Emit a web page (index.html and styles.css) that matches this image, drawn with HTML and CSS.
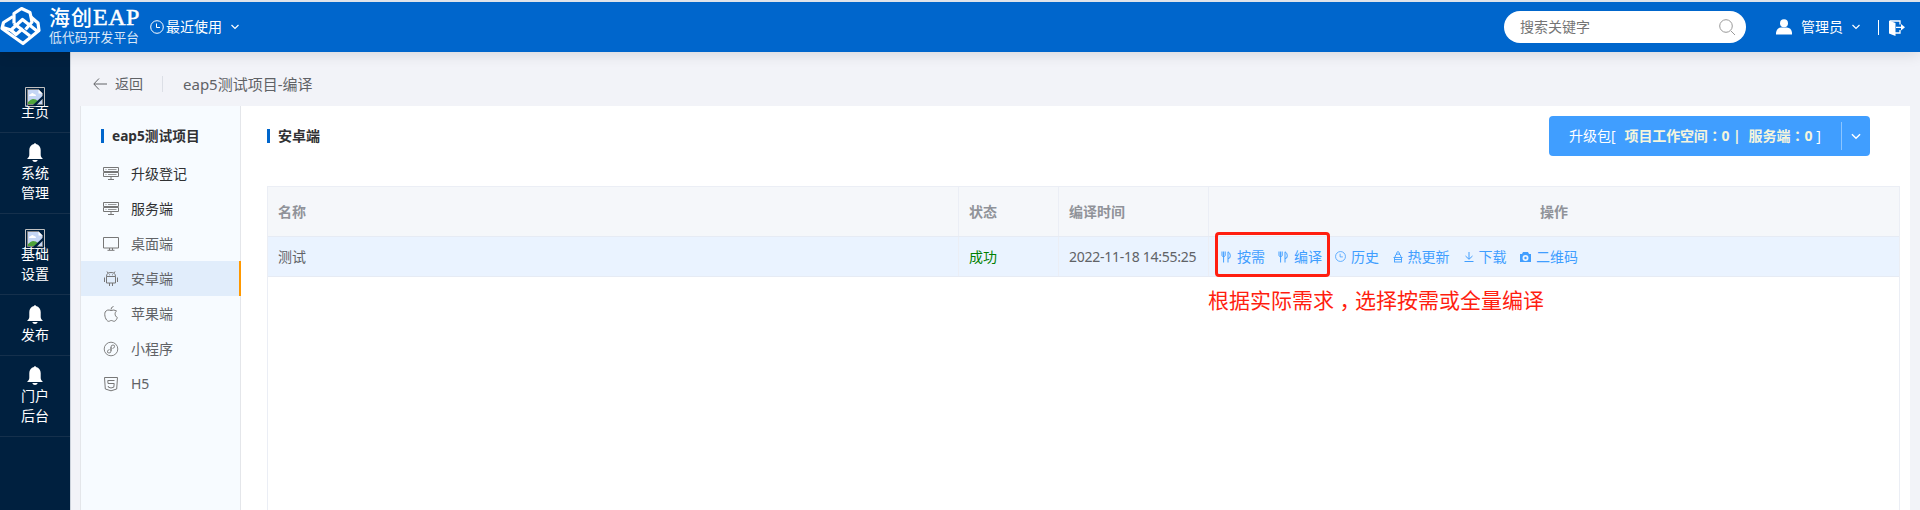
FILE: index.html
```html
<!DOCTYPE html>
<html lang="zh-CN">
<head>
<meta charset="utf-8">
<title>eap5测试项目-编译</title>
<link rel="stylesheet" href="styles.css">
</head>
<body>
<svg class="defs" width="0" height="0">
  <symbol id="bell" viewBox="0 0 16 19"><path fill="currentColor" d="M7 1q1-2 2 0c3 .7 4.700 3 4.700 6v5c0 1.600 .8 2.500 2.300 4H0c1.500-1.500 2.300-2.400 2.300-4V7c0-3 1.700-5.300 4.700-6zM5.200 17h5.600q-.8 2-2.800 2t-2.800-2z"/></symbol>
  <symbol id="down" viewBox="0 0 10 6"><path d="M1.500 1L5 4.500 8.500 1" fill="none" stroke="currentColor" stroke-width="1.200"/></symbol>
  <symbol id="clock" viewBox="0 0 14 14"><g fill="none" stroke="currentColor"><circle cx="7" cy="7" r="6.300"/><path d="M6.500 3.500v4H10"/></g></symbol>
  <symbol id="broken" viewBox="0 0 20 20"><path fill="none" stroke="#c0c0c0" d="M.5 .5h19v19H.5z"/><path fill="#c5d6f5" stroke="#848484" d="M2.500 2.500h11l4 4v11h-15z"/><path fill="#fff" d="M13.500 2.500v4h4zM4 9q0-2 2-2 1-2 3 0 2 0 2 2z"/><path fill="#4fa33a" d="M3 17v-2q3-3 5-3 3 0 5 2l-3 3z"/><path fill="#00203f" d="M18 8.500v3L11.500 18H8z"/></symbol>
  <symbol id="server" viewBox="0 0 16 14"><g fill="none" stroke="currentColor"><path d="M.5 .5h15v4H.5zM.5 5.500h15v4H.5zM8 10v3M5 12.500h6"/><path d="M2.500 2.500h1M5 2.500h8.500M2.500 7.500h1M5 7.500h8.500" stroke-opacity=".75"/></g></symbol>
  <symbol id="fork" viewBox="0 0 10 12"><path fill="none" stroke="currentColor" d="M1 .5v4q0 1 1.500 1T4.200 4.500v-4M2.600 .5V11.500M7 11.500V.8q2.300 1 2.300 4T7 7.500"/></symbol>
</svg>

<header class="topbar">
  <div class="brand">
    <svg class="logo" width="41" height="40" viewBox="0 0 41 40" fill="none" stroke="#fff" stroke-width="3.200" stroke-linejoin="round">
      <path d="M13 10.500L3.500 16.500 2 22.500 23 37.500 39 24.500 38 17 31 11"/>
      <path d="M14 17.500V7.500L21.500 2.500 30 6.500 32 16 25.500 23.500"/>
      <path d="M3 21.500L11 24 22.500 13.500 37 25"/><path d="M14 17.500L30 30M11 24l5 4.500 7-6"/>
    </svg>
    <div class="brand-text"><strong>海创<em>EAP</em></strong><span>低代码开发平台</span></div>
  </div>
  <div class="recent"><svg width="14" height="14"><use href="#clock"/></svg><span>最近使用</span><svg class="arrow" width="10" height="6"><use href="#down"/></svg></div>
  <div class="search"><span>搜索关键字</span>
    <svg width="17" height="17" viewBox="0 0 17 17" fill="none" stroke="#999"><circle cx="7" cy="7" r="6.300"/><path d="M12 12l4 4"/></svg>
  </div>
  <div class="user">
    <svg width="16" height="16" viewBox="0 0 16 16" fill="#fff"><circle cx="8" cy="4.200" r="4"/><path d="M0 15.500v-2Q1 8.800 5 8.600h6q4 .2 5 4.900v2z"/></svg>
    <span>管理员</span><svg width="10" height="6"><use href="#down"/></svg>
  </div>
  <div class="exit">
    <svg width="16" height="16" viewBox="0 0 16 16"><path fill="#fff" d="M0 .5L6.500 3v13L0 13.500z"/><path d="M1 1h10v3.500M11 10v3H6M7 7.300h7" fill="none" stroke="#fff" stroke-width="1.300"/><path fill="#fff" d="M12 4l4 3.300-4 3.300z"/></svg>
  </div>
</header>

<div class="shell">
  <nav class="rail">
    <a class="rail-home"><svg width="20" height="20"><use href="#broken"/></svg><span>主页</span></a>
    <a class="rail-system"><svg width="16" height="19"><use href="#bell"/></svg><span>系统<br>管理</span></a>
    <a class="rail-base"><svg width="20" height="20"><use href="#broken"/></svg><span>基础<br>设置</span></a>
    <a class="rail-publish"><svg width="16" height="19"><use href="#bell"/></svg><span>发布</span></a>
    <a class="rail-portal"><svg width="16" height="19"><use href="#bell"/></svg><span>门户<br>后台</span></a>
  </nav>
  <main class="page">
    <div class="crumb">
      <svg width="14" height="12" viewBox="0 0 14 12" fill="none" stroke="#606266"><path d="M6 .5L.8 6 6 11.500M1 6h13"/></svg>
      <span class="back">返回</span><span class="title">eap5测试项目-编译</span>
    </div>
    <div class="panel">
      <aside class="menu">
        <h2 class="heading">eap5测试项目</h2>
        <ul>
          <li class="strong"><svg width="16" height="14"><use href="#server"/></svg>升级登记</li>
          <li class="strong"><svg width="16" height="14"><use href="#server"/></svg>服务端</li>
          <li><svg width="16" height="14" viewBox="0 0 16 14" fill="none" stroke="currentColor"><path d="M.5 .5h15v10.500H.5zM6.500 11v2M9.500 11v2M4.500 13.300h7"/></svg>桌面端</li>
          <li class="active"><svg width="16" height="16" viewBox="0 0 16 16" fill="none" stroke="currentColor"><path d="M3.500 5.500q0-4 4.500-4t4.500 4zM5 2L4 .5M11 2l1-1.500M3.500 5.500v6.500h9V5.500M1.500 6.500v4.500M14.500 6.500v4.500M6.500 12v3M9.500 12v3M6 3.800h.8M9.200 3.800h.8"/></svg>安卓端</li>
          <li><svg width="16" height="16" viewBox="0 0 16 16" fill="none" stroke="currentColor"><path d="M13.500 5Q11 3.300 8 4.500 4 3 2.200 6C.8 9 3 15 5.500 15.300 7 15.300 7 14.500 8.300 14.500s1.500 .8 3 .8C13 15 14 12.500 14.300 11.500 11.500 10 11.500 6.500 13.500 5zM8 3.500Q8 1 10.500 .5"/></svg>苹果端</li>
          <li><svg width="16" height="16" viewBox="0 0 16 16" fill="none" stroke="currentColor" stroke-width=".9"><circle cx="8" cy="8" r="6.800"/><path d="M8 10V6q0-2 2-2t1.500 1.800Q11 7.300 9.500 7.500M8 6v4q0 2-2 2t-1.500-1.800Q5 8.700 6.500 8.500"/></svg>小程序</li>
          <li><svg width="16" height="16" viewBox="0 0 16 16" fill="none" stroke="currentColor"><path d="M1.500 1.500h13l-.8 11.500L8 14.800 2.300 13zM11.500 4.500H4.800L5 7.500h6.200l-.4 3.700L8 12l-2.600-.8-.2-1.200"/></svg>H5</li>
        </ul>
      </aside>
      <section class="content">
        <div class="content-head">
          <h2 class="heading">安卓端</h2>
          <div class="upgrade"><div class="upgrade-main">升级包[<b class="workspace">项目工作空间<i class="punct" lang="zh-TW">：</i>0 |</b><b>服务端<i class="punct" lang="zh-TW">：</i>0</b>&nbsp;]</div><div class="upgrade-toggle"><svg width="12" height="7"><use href="#down"/></svg></div></div>
        </div>
        <div class="table">
          <div class="row head"><div>名称</div><div>状态</div><div>编译时间</div><div class="center">操作</div></div>
          <div class="row data"><div>测试</div><div class="ok">成功</div><div class="date">2022-11-18 14:55:25</div>
            <div class="actions">
              <div class="boxed">
                <a><svg width="10" height="12"><use href="#fork"/></svg>按需</a>
                <a><svg width="10" height="12"><use href="#fork"/></svg>编译</a>
              </div>
              <a class="history"><svg width="11" height="11"><use href="#clock"/></svg>历史</a>
              <a class="hot"><svg width="10" height="12" viewBox="0 0 10 12" fill="none" stroke="currentColor" stroke-width=".9"><path d="M3.500 3q0-2 1.500-2.500Q6.500 1 6.500 3M2 6q0-3 3-3t3 3M.5 6.500h9M1.500 8.500h7M1 11h8M1.500 6.500V11M8.500 6.500V11"/></svg>热更新</a>
              <a class="download"><svg width="10" height="12" viewBox="0 0 10 12" fill="none" stroke="currentColor"><path d="M5 1v7M1.500 5L5 8.300 8.500 5M.5 10.500h9"/></svg>下载</a>
              <a class="qr"><svg width="11" height="12" viewBox="0 0 11 12"><path fill="currentColor" fill-rule="evenodd" d="M3 1h5l1 2h2v8H0V3h2zM5.500 4a3 3 0 1 0 0 6 3 3 0 1 0 0-6z"/><circle cx="5.500" cy="7" r="1.200" fill="currentColor"/></svg>二维码</a>
            </div>
          </div>
          <p class="note">根据实际需求<span class="comma">，</span>选择按需或全量编译</p>
        </div>
      </section>
    </div>
  </main>
</div>
</body>
</html>
```
FILE: styles.css
```css
* { box-sizing: border-box; }
body { margin: 0; height: 510px; overflow: hidden; background: #f2f3f8; color: #606266; font: 14px/20px "Noto Sans", "Noto Sans CJK SC", sans-serif; display: flex; flex-direction: column; }
svg { display: block; flex: none; }
.defs { position: absolute; }
h2, p, ul { margin: 0; padding: 0; }
.punct { font-family: "Noto Sans CJK TC", sans-serif; font-style: normal; line-height: 1; }

.topbar { position: relative; z-index: 1; flex: none; height: 52px; border-top: 2px solid #dfe3ea; background: #0066cc; color: #fff; display: flex; align-items: center; box-shadow: 0 2px 14px rgba(0, 0, 0, .12); }
.brand { width: 150px; height: 50px; display: flex; align-items: flex-start; }
.logo { margin-top: 4px; }
.brand-text { margin: 2px 0 0 8px; display: flex; flex-direction: column; white-space: nowrap; }
.brand-text strong { font: 500 21px/24px "Noto Sans CJK SC", sans-serif; letter-spacing: 1px; }
.brand-text em { font: 400 24px/24px "Liberation Serif", serif; letter-spacing: .5px; -webkit-text-stroke: .5px #fff; }
.brand-text span { font-size: 12.700px; line-height: 16px; letter-spacing: .2px; opacity: .85; }
.recent { display: flex; align-items: center; gap: 2px; }
.recent .arrow { margin-left: 6px; }
.search { margin-left: auto; width: 242px; height: 32px; padding: 0 10px 0 16px; border-radius: 16px; background: #fff; color: #757575; display: flex; align-items: center; justify-content: space-between; }
.user { margin-left: 30px; width: 102px; display: flex; align-items: center; gap: 9px; }
.user svg:last-child { margin-left: -1px; }
.exit { width: 42px; height: 15px; border-left: 1px solid #fff; padding-left: 10px; }

.shell { flex: 1; min-height: 0; display: flex; }
.rail { width: 71px; background: #00203f; border-right: 1px solid #ccd3dc; color: #fff; }
.rail a { display: flex; flex-direction: column; align-items: center; border-bottom: 1px solid #15304c; text-align: center; }
.rail span { line-height: 20px; }
.rail-home { height: 81px; padding-top: 35px; }
.rail-system { height: 81px; padding-top: 10px; }
.rail-base { height: 81px; padding-top: 15px; }
.rail-publish { height: 61px; padding-top: 10px; }
.rail-portal { height: 81px; padding-top: 10px; }
.rail-home span, .rail-base span { margin-top: -5px; }
.rail-system span, .rail-publish span, .rail-portal span { margin-top: 1px; }

.page { flex: 1; display: flex; flex-direction: column; padding: 0 10px 0 9px; }
.crumb { height: 54px; padding: 9px 0 0 13px; display: flex; align-items: center; }
.back { margin-left: 8px; padding-right: 19px; line-height: 16px; border-right: 1px solid #dcdfe6; }
.title { margin-left: 20px; font-size: 15px; }
.panel { flex: 1; display: flex; background: #fff; }
.menu { width: 161px; background: #f7fbff; border: solid #e4e6ea; border-width: 0 1px; }
.heading { display: flex; align-items: center; gap: 8px; color: #303133; font-size: 14px; line-height: 20px; font-weight: 700; }
.heading::before { content: ""; width: 3px; height: 14px; background: #0066cc; }
.menu .heading { padding: 20px 0 0 20px; font-size: 13.700px; }
.menu ul { list-style: none; margin-top: 10px; }
.menu li { height: 35px; padding-left: 22px; display: flex; align-items: center; gap: 12px; }
.menu li svg { color: #777; }
.menu .strong { color: #303133; }
.menu .active { background: #e1edfb; margin-right: -1px; border-right: 2px solid #ff9800; }

.content { flex: 1; padding: 10px 10px 0 26px; display: flex; flex-direction: column; }
.content-head { height: 70px; display: flex; justify-content: space-between; align-items: flex-start; padding-right: 30px; }
.content-head .heading { padding-top: 10px; }
.upgrade { width: 321px; height: 40px; background: #409eff; color: #fff; border-radius: 4px; display: flex; align-items: center; }
.upgrade-main { width: 292px; padding-left: 20px; white-space: nowrap; }
.upgrade b { color: #f5f5dc; }
.upgrade .workspace { margin: 0 8px 0 9px; letter-spacing: -.15px; }
.upgrade-toggle { height: 28px; flex: 1; border-left: 1px solid #8cc5ff; display: flex; align-items: center; justify-content: center; }
.table { flex: 1; border: 1px solid #ebeef5; border-bottom: 0; }
.row { display: grid; grid-template-columns: 691px 100px 150px 1fr; border-bottom: 1px solid #e6ebf4; }
.row > div { display: flex; align-items: center; padding-left: 10px; border-right: 1px solid #ebeef5; white-space: nowrap; }
.row > div:last-child { border-right: 0; }
.head { height: 50px; background: #f5f7fa; color: #909399; font-weight: 700; }
.row > .center { justify-content: center; padding: 0; }
.data { height: 40px; background: #eaf3ff; }
.ok { color: #008000; }
.date { letter-spacing: -.27px; }
.row > .actions { padding-left: 6px; color: #409eff; }
.actions a { display: flex; align-items: center; gap: 5px; }
.boxed { width: 115px; height: 45px; margin: -7px 0 -3px; border: 3px solid #ff1e10; border-radius: 4px; padding: 5px 0 0 3px; display: flex; gap: 13px; align-items: center; }
.actions .boxed a { gap: 6px; }
.history { margin-left: 5px; }
.hot { margin-left: 13.500px; }
.download { margin-left: 14px; }
.qr { margin-left: 13.500px; }
.note { margin: 8px 0 0 940px; color: #ff1e10; font-size: 21px; line-height: 30px; white-space: nowrap; }
.comma { font-feature-settings: "halt"; margin: 0 5px 0 5.500px; }
```
